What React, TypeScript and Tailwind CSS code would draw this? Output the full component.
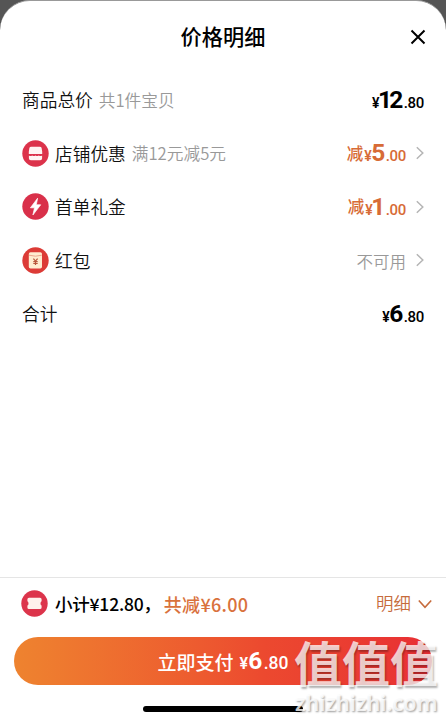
import type { ReactNode } from "react";

const Chevron = () => (
  <svg className="ml-2.5 h-3.5 w-2 shrink-0" viewBox="0 0 8 14" fill="none" stroke="#b5b5b5" strokeWidth="1.5">
    <path d="M.8 1.2 6.8 7 .8 12.8" />
  </svg>
);

const ShopIcon = () => (
  <svg className="h-[27px] w-[27px]" viewBox="0 0 27 27">
    <circle cx="13.5" cy="13.5" r="13.2" fill="#dc334b" />
    <path d="M9.3 6.8h8.4q1.6 0 1.9 1.2l.6 3.8v2.3H6.8v-2.3l.6-3.8q.3-1.2 1.9-1.2Z" fill="#fff4f2" />
    <path d="M6.9 15.4q1.6 1.2 3.3 0 1.6 1.2 3.3 0 1.6 1.2 3.3 0 1.6 1.2 3.3 0v2.9q0 1.9-1.9 1.9H8.8q-1.9 0-1.9-1.9Z" fill="#fff4f2" />
  </svg>
);

const BoltIcon = () => (
  <svg className="h-[27px] w-[27px]" viewBox="0 0 27 27">
    <circle cx="13.5" cy="13.5" r="13.2" fill="#d9304a" />
    <path d="M15.6 5.2 8.4 14.8h4.1l-1.6 7.2 7.8-10.2h-4.4Z" fill="#fff" stroke="#fff" strokeWidth=".7" strokeLinejoin="round" />
  </svg>
);

const PacketIcon = () => (
  <svg className="h-[27px] w-[27px]" viewBox="0 0 27 27">
    <circle cx="13.5" cy="13.5" r="13.2" fill="#dc3b36" />
    <rect x="6.8" y="5.3" width="13.2" height="16.2" rx="1.7" fill="#ffeccf" />
    <path d="M7 8.2q6.5 2 12.8 0" fill="none" stroke="#eba78d" strokeWidth="1" />
    <path d="m11.4 11.6 2.1 2.5 2.1-2.5M13.5 14v4M11.3 14.5h4.4M11.3 16.4h4.4" fill="none" stroke="#b9563a" strokeWidth="1.2" />
  </svg>
);

const TicketIcon = () => (
  <svg className="h-[27px] w-[27px]" viewBox="0 0 27 27">
    <circle cx="13.5" cy="13.5" r="13.2" fill="#dc344b" />
    <path d="M8 7.8h11q1.6 0 1.6 1.5v2q-1.1.3-1.1 2.1t1.1 2.1v2q0 1.5-1.6 1.5H8q-1.6 0-1.6-1.5v-2q1.1-.3 1.1-2.1t-1.1-2.1v-2Q6.4 7.8 8 7.8Z" fill="#fff1ec" />
  </svg>
);

function Price({ whole, cents, large }: { whole: string; cents: string; large?: boolean }) {
  const lead = whole.startsWith("1");
  return (
    <span className="inline-flex items-baseline font-['Roboto'] leading-none">
      <span className={large ? "text-[16px] font-semibold" : "text-[14px] font-semibold tracking-[-0.5px]"}>¥</span>
      <span className={lead ? "-ml-px text-[24.5px] font-bold tracking-[-2.7px]" : "text-[24.5px] font-bold tracking-[-0.6px]"}>{whole}</span>
      <span className={large ? "ml-0.5 text-[17.5px] font-medium" : lead ? "ml-[3px] text-[15px] font-medium tracking-[-0.3px]" : "ml-px text-[15px] font-medium tracking-[-0.3px]"}>.{cents}</span>
    </span>
  );
}

function Discount({ whole }: { whole: string }) {
  return (
    <span className="flex items-center text-[#d76b36]">
      <span className="mr-px pb-px text-[16.5px] font-medium">减</span>
      <Price whole={whole} cents="00" />
    </span>
  );
}

function Row({ icon, label, note, children }: { icon?: ReactNode; label: string; note?: string; children: ReactNode }) {
  return (
    <div className="flex h-[53.5px] items-center">
      {icon && <span className="mr-[6px] shrink-0">{icon}</span>}
      <span className="pt-px text-[17.7px] font-[350] text-[#111]">{label}</span>
      {note && <span className="ml-1.5 pt-px text-[16.7px] font-[350] text-[#999]">{note}</span>}
      <div className="ml-auto flex items-center">{children}</div>
    </div>
  );
}

export default function App() {
  return (
    <div className="relative h-[720px] w-[446px] overflow-hidden bg-[#555] font-['Noto_Sans_CJK_SC',sans-serif] leading-none whitespace-nowrap text-black">
      <main className="flex h-full flex-col rounded-t-[30px] border-t border-[#999] bg-white">
        <header className="grid h-[72px] shrink-0 grid-cols-3 items-center px-5">
          <h1 className="col-start-2 pb-[2px] text-center text-[21.2px] font-medium">价格明细</h1>
          <svg className="h-4 w-4 justify-self-end" viewBox="0 0 16 16" fill="none" stroke="#000" strokeWidth="2">
            <path d="m1.5 1.5 13 13m0-13-13 13" />
          </svg>
        </header>
        <section className="pr-[22px] pl-[22px]">
          <Row label="商品总价" note="共1件宝贝"><Price whole="12" cents="80" /></Row>
          <Row icon={<ShopIcon />} label="店铺优惠" note="满12元减5元">
            <Discount whole="5" /><Chevron />
          </Row>
          <Row icon={<BoltIcon />} label="首单礼金">
            <Discount whole="1" /><Chevron />
          </Row>
          <Row icon={<PacketIcon />} label="红包"><span className="pt-px text-[16.5px] font-[350] text-[#999]">不可用</span><Chevron /></Row>
          <Row label="合计"><Price whole="6" cents="80" /></Row>
        </section>
        <footer className="mt-auto h-[143px] shrink-0 border-t border-[#e5e5e5]">
          <div className="flex h-[51px] items-center pr-[14px] pl-[21px]">
            <TicketIcon />
            <span className="ml-[7px] text-[17.5px] font-medium tracking-[-0.2px]">小计¥12.80，</span>
            <span className="ml-[3px] text-[18px] font-medium tracking-[0.3px] text-[#d9713c]">共减¥6.00</span>
            <span className="ml-auto pb-[2px] text-[17.5px] font-[350] text-[#c66b3c]">明细</span>
            <svg className="ml-[7px] h-2.5 w-3.5" viewBox="0 0 14 10" fill="none" stroke="#c66b3c" strokeWidth="1.6"><path d="m.8 1.5 6.2 6.7 6.2-6.7" /></svg>
          </div>
          <button className="mt-[8px] ml-[14px] flex h-[48px] w-[418px] items-center justify-center rounded-full bg-linear-to-r from-[#ee832f] via-[#ec492f] via-60% to-[#e82e34] text-white">
            <span className="mr-[6px] text-[19px] font-medium">立即支付</span><Price whole="6" cents="80" large />
          </button>
          <div className="mt-[21px] ml-[143px] h-[6px] w-[160px] rounded-full bg-black" />
        </footer>
      </main>
      <div className="absolute top-[637px] left-[294px] w-[145px] text-white/75">
        <div className="text-[48px] leading-[48px] font-bold [text-shadow:1px_2px_2px_rgba(0,0,0,0.3)]">值值值</div>
        <div className="mt-[6px] ml-px font-['Noto_Sans'] text-[21.7px] leading-[24px] font-semibold text-white/80 [text-shadow:1px_1px_2px_rgba(0,0,0,0.4)]">zhizhizhi.com</div>
      </div>
    </div>
  );
}
